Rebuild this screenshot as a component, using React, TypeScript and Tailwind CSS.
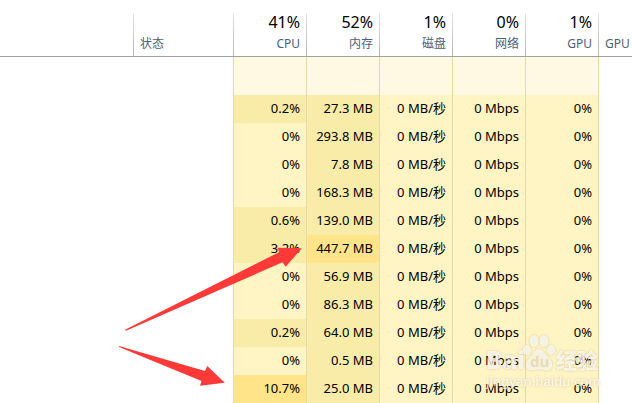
import clsx from "clsx";

const columns = [
  { usage: "41%", label: "CPU" },
  { usage: "52%", label: "内存" },
  { usage: "1%", label: "磁盘" },
  { usage: "0%", label: "网络" },
  { usage: "1%", label: "GPU" },
];

const processes = [
  { cpu: "0.2%", memory: "27.3 MB" },
  { cpu: "0%", memory: "293.8 MB" },
  { cpu: "0%", memory: "7.8 MB" },
  { cpu: "0%", memory: "168.3 MB" },
  { cpu: "0.6%", memory: "139.0 MB" },
  { cpu: "3.2%", memory: "447.7 MB" },
  { cpu: "0%", memory: "56.9 MB" },
  { cpu: "0%", memory: "86.3 MB" },
  { cpu: "0.2%", memory: "64.0 MB" },
  { cpu: "0%", memory: "0.5 MB" },
  { cpu: "10.7%", memory: "25.0 MB" },
];

const heat = {
  low: "bg-[#fff4c4]",
  medium: "bg-[#f9eca8]",
  high: "bg-[#ffe48a]",
};

function cpuHeat(value: string) {
  const n = parseFloat(value);
  if (n > 10) return heat.high;
  return n > 0 ? heat.medium : heat.low;
}

function memoryHeat(value: string) {
  return parseFloat(value) > 400 ? heat.high : heat.medium;
}

const divider =
  "h-[43px] border-r [border-image:linear-gradient(to_bottom,#e6e6e6,#b4b4b4)_1]";

function Cell({ value, color }: { value: string; color: string }) {
  return (
    <td
      className={clsx(
        "h-7 border-r border-[#ead9a4] p-0 pr-1.5 pb-0.5 text-right text-[13px] leading-4 text-black",
        color
      )}
    >
      {value}
    </td>
  );
}

function ProcessTable() {
  return (
    <table className="w-full table-fixed border-separate border-spacing-0 whitespace-nowrap">
      <colgroup>
        <col />
        <col className="w-[100px]" />
        {columns.map((c) => (
          <col key={c.label + c.usage} className="w-[73px]" />
        ))}
        <col className="w-[33px]" />
      </colgroup>
      <thead className="text-xs text-[#4c607a]">
        <tr>
          <th className="border-b border-[#a0a0a0] p-0 pt-[13px]">
            <div className={divider} />
          </th>
          <th className="border-b border-[#a0a0a0] p-0 pt-[13px] text-left font-normal">
            <div className={clsx(divider, "flex items-end pb-1 pl-1.5")}>
              状态
            </div>
          </th>
          {columns.map((c) => (
            <th
              key={c.label}
              className="border-b border-[#a0a0a0] p-0 pt-[13px] font-normal"
            >
              <div
                className={clsx(
                  divider,
                  "flex flex-col items-end justify-between pr-1.5 pb-1"
                )}
              >
                <span className="text-base leading-[18px] text-black">
                  {c.usage}
                </span>
                <span>{c.label}</span>
              </div>
            </th>
          ))}
          <th className="border-b border-[#a0a0a0] p-0 pt-[13px] font-normal">
            <div className="flex h-[43px] items-end pb-1 pl-1.5">GPU</div>
          </th>
        </tr>
      </thead>
      <tbody>
        <tr>
          <td />
          <td className="border-r border-[#ead9a4]" />
          {columns.map((c) => (
            <td
              key={c.label}
              className="h-[38px] border-r border-[#ead9a4] bg-[#fff9e4] p-0"
            />
          ))}
          <td />
        </tr>
        {processes.map((p, i) => (
          <tr key={i}>
            <td />
            <td className="border-r border-[#ead9a4]" />
            <Cell value={p.cpu} color={cpuHeat(p.cpu)} />
            <Cell value={p.memory} color={memoryHeat(p.memory)} />
            <Cell value="0 MB/秒" color={heat.low} />
            <Cell value="0 Mbps" color={heat.low} />
            <Cell value="0%" color={heat.low} />
            <td />
          </tr>
        ))}
      </tbody>
    </table>
  );
}

function Arrows() {
  return (
    <svg
      className="absolute top-[240px] right-[320px] fill-[#fd3a38]"
      width="200"
      height="155"
      viewBox="112 240 200 155"
      aria-hidden="true"
    >
      <path d="M125 329.8 L279.5 252 L277.3 247.7 L301.8 248.3 L285.7 266.7 L282.5 262.3 L126 330.8Z" />
      <path d="M119 346 L205 371 L207.3 366 L224.8 382.7 L200 385.7 L201.5 381 L119 347Z" />
    </svg>
  );
}

function Watermark() {
  return (
    <div className="absolute top-[334px] right-[30px] w-[116px] text-white/75 drop-shadow-[0_0_1px_rgba(150,130,70,0.5)]">
      <div className="flex h-[38px] items-end">
        <span className="w-9 font-['Open_Sans'] text-2xl leading-6 font-extrabold">
          Bai
        </span>
        <svg width="34" height="38" viewBox="0 0 34 38" fill="currentColor">
          <ellipse cx="5" cy="16" rx="4" ry="5" />
          <ellipse cx="12" cy="7" rx="4.5" ry="6" />
          <ellipse cx="22" cy="7" rx="4.5" ry="6" />
          <ellipse cx="29" cy="16" rx="4" ry="5" />
          <path d="M17 15c4 0 5 4 8 7s6 5 5 10-5 5-8 4-7-1-10 0-8 0-8-5 4-7 6-9 3-7 7-7z" />
          <text
            x="8"
            y="33"
            fontSize="15"
            fontWeight="bold"
            fill="#e8ddb0"
          >
            du
          </text>
        </svg>
        <span className="text-[21px] leading-6 font-black">经验</span>
      </div>
      <div className="pt-px text-[13px] leading-4 font-medium">
        jingyan.baidu.com
      </div>
    </div>
  );
}

export default function App() {
  return (
    <main className="relative h-screen overflow-hidden bg-white font-['Noto_Sans','Noto_Sans_CJK_SC',sans-serif]">
      <ProcessTable />
      <Arrows />
      <Watermark />
    </main>
  );
}
